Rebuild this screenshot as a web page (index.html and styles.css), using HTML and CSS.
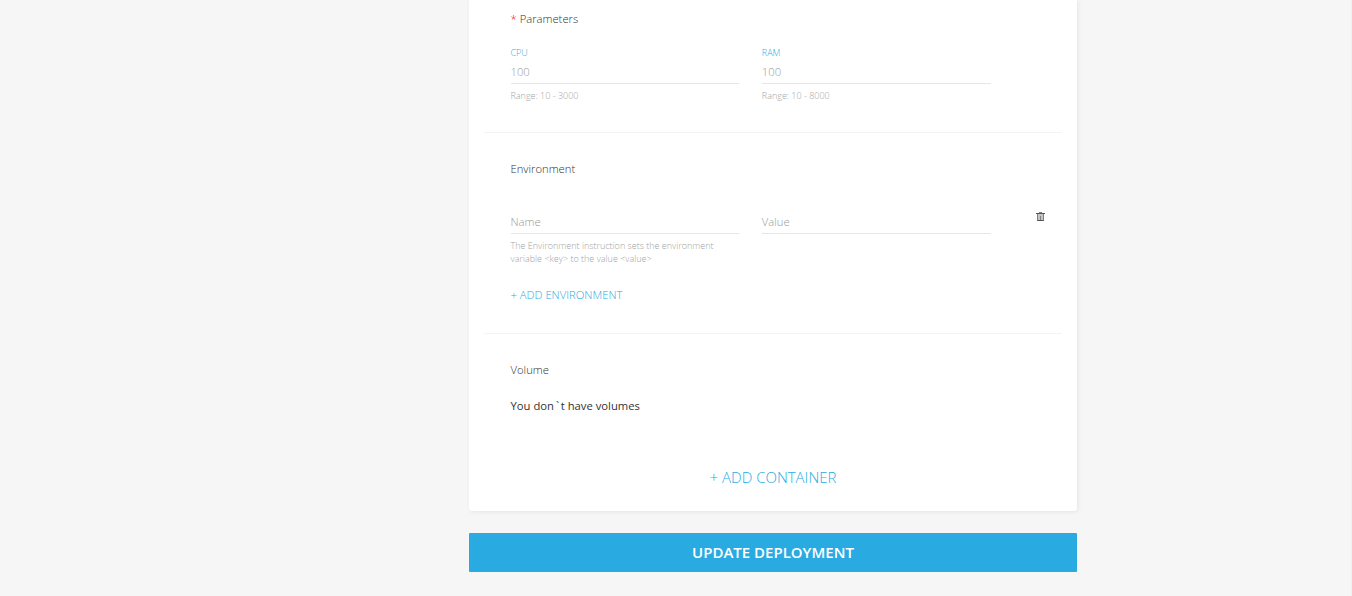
FILE: index.html
```html
<!DOCTYPE html>
<html lang="en">
<head>
<meta charset="utf-8">
<title>Update deployment</title>
<link rel="stylesheet" href="styles.css">
</head>
<body>
<main class="page">
  <div class="card">
    <section class="section section-parameters">
      <h2 class="title"><span class="required">*</span> Parameters</h2>
      <div class="fields">
        <div class="field">
          <div class="field-label">CPU</div>
          <div class="field-value">100</div>
          <div class="field-help">Range: 10 - 3000</div>
        </div>
        <div class="field">
          <div class="field-label">RAM</div>
          <div class="field-value">100</div>
          <div class="field-help">Range: 10 - 8000</div>
        </div>
      </div>
    </section>
    <section class="section section-environment">
      <h2 class="title">Environment</h2>
      <div class="fields">
        <div class="field">
          <div class="field-label"></div>
          <div class="field-value">Name</div>
          <div class="field-help">The Environment instruction sets the environment variable &lt;key&gt; to the value &lt;value&gt;</div>
        </div>
        <div class="field">
          <div class="field-label"></div>
          <div class="field-value">Value</div>
        </div>
        <svg class="trash" width="9" height="10" viewBox="0 0 9 10">
          <path class="trash-fill" d="M1 2h7v7H1z"/>
          <path class="trash-side" d="M1.5 2v7M7.5 2v7M4.5 4v4"/>
          <path class="trash-line" d="M0 1.5h9M1.5 8.5h6"/>
          <path class="trash-side" d="M3 .5h3"/>
        </svg>
      </div>
      <div class="add-environment">+ ADD ENVIRONMENT</div>
    </section>
    <section class="section section-volume">
      <h2 class="title">Volume</h2>
      <p class="empty">You don<span class="tick">`</span>t have volumes</p>
    </section>
    <div class="add-container">+ ADD CONTAINER</div>
  </div>
  <button class="submit">UPDATE DEPLOYMENT</button>
</main>
</body>
</html>
```
FILE: styles.css
```css
* {
  box-sizing: border-box;
}

body {
  margin: 0;
  height: 596px;
  overflow: hidden;
  background: #f6f6f6;
  border-right: 1px solid #f1f1f1;
  font-family: "Open Sans", sans-serif;
  font-weight: 300;
}

.page {
  width: 608px;
  margin-left: 469px;
}

.card {
  height: 511px;
  padding: 0 15px;
  background: #fff;
  border-radius: 0 0 3px 3px;
  box-shadow: 1px 1px 4px rgba(0, 0, 0, 0.07);
}

.section {
  padding: 28px 0 0 26.5px;
  border-bottom: 1px solid #f4f4f4;
}

.section-parameters {
  height: 133px;
  padding-top: 11px;
}

.section-environment {
  height: 201px;
}

.section-volume {
  height: 122px;
  border-bottom: 0;
}

.title {
  margin: 0;
  font-size: 11.25px;
  line-height: 16px;
  font-weight: 300;
  color: #333;
}

.required {
  color: #f00;
}

.fields {
  display: flex;
  gap: 22.5px;
  margin-top: 18px;
}

.field {
  flex: none;
  width: 228.8px;
}

.field-label {
  height: 15px;
  font-size: 9px;
  line-height: 15px;
  color: #29abe2;
}

.field-value {
  height: 24px;
  padding-top: 4px;
  border-bottom: 1px solid #e6e6e6;
  font-size: 11.25px;
  line-height: 16px;
  color: #999;
}

.field-help {
  width: 220px;
  padding-top: 5px;
  font-size: 9px;
  line-height: 13px;
  color: #a3a3a3;
}

.trash {
  flex: none;
  margin: 17px 0 0 23px;
}

.add-environment {
  margin-top: 22px;
  font-size: 11.25px;
  line-height: 16px;
  color: #29abe2;
}

.trash-fill {
  fill: #c4c4c4;
}

.trash-line {
  fill: none;
  stroke: #555;
}

.trash-side {
  fill: none;
  stroke: #808080;
}

.empty {
  margin: 20px 0 0;
  font-size: 11.25px;
  line-height: 16px;
  font-weight: 400;
  color: #333;
}

.tick {
  margin-right: 1.7px;
  margin-left: 2px;
}

.add-container {
  margin-top: 10px;
  text-align: center;
  font-size: 15px;
  line-height: 22px;
  color: #29abe2;
}

.submit {
  display: block;
  width: 100%;
  height: 39px;
  margin-top: 22px;
  padding: 0 0 2px;
  border: 0;
  border-radius: 1px;
  background: #29abe2;
  font-family: inherit;
  font-size: 15px;
  font-weight: 600;
  color: #fff;
}
```
